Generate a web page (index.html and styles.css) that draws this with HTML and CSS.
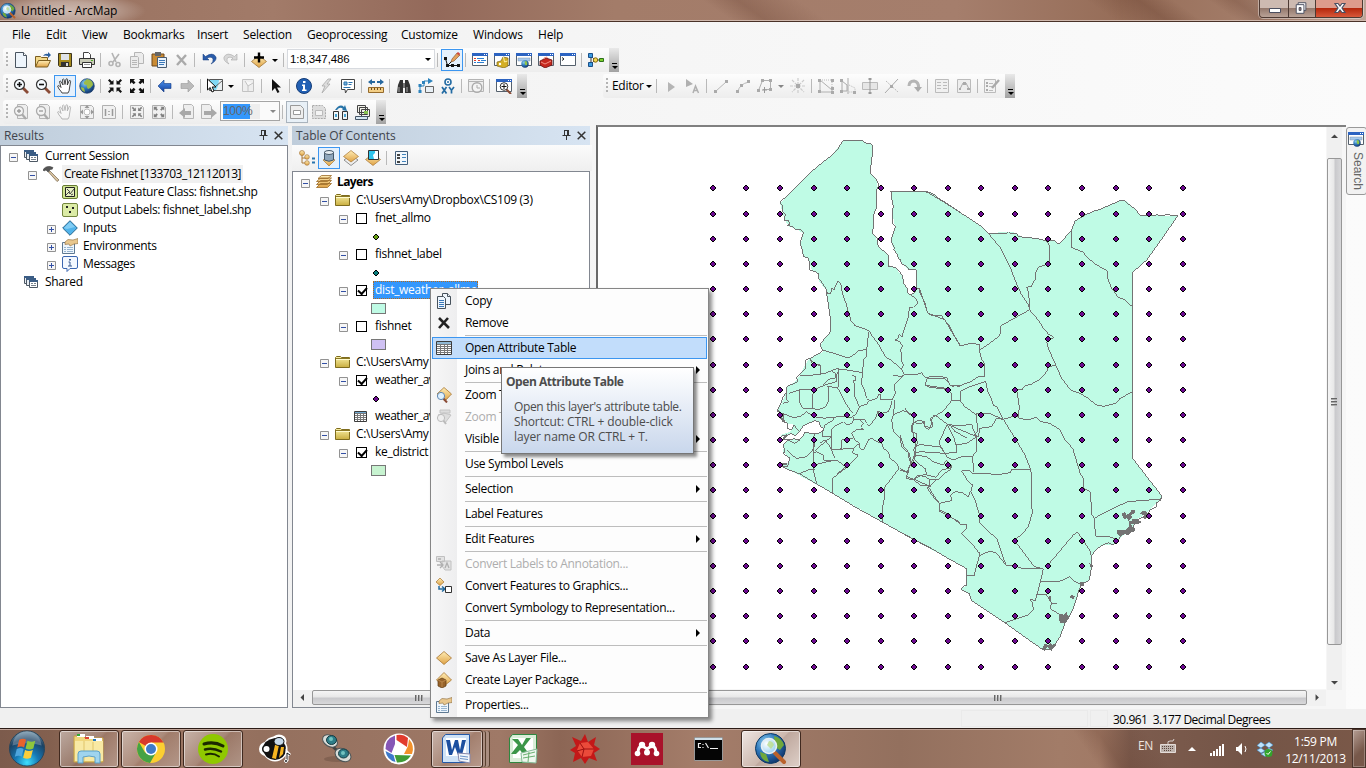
FILE: index.html
```
<!DOCTYPE html>
<html lang="en">
<head>
<meta charset="utf-8">
<title>Untitled - ArcMap</title>
<link rel="stylesheet" href="styles.css">
</head>
<body>
<svg class="defs" width="0" height="0">
<defs>
<linearGradient id="gold" x1="0" y1="0" x2="0" y2="1"><stop offset="0" stop-color="#ffedb5"/><stop offset="1" stop-color="#dfa245"/></linearGradient>
<linearGradient id="fold" x1="0" y1="0" x2="0" y2="1"><stop offset="0" stop-color="#fbf2a8"/><stop offset="1" stop-color="#c9ae40"/></linearGradient>
<linearGradient id="blu" x1="0" y1="0" x2="0" y2="1"><stop offset="0" stop-color="#4d95f0"/><stop offset="1" stop-color="#153f9c"/></linearGradient>
<radialGradient id="glb" cx=".35" cy=".3" r=".8"><stop offset="0" stop-color="#8fd0f0"/><stop offset=".45" stop-color="#2f78bc"/><stop offset="1" stop-color="#0b2a5e"/></radialGradient>
<radialGradient id="orb" cx=".5" cy=".9" r=".95"><stop offset="0" stop-color="#3fe0ff"/><stop offset=".35" stop-color="#1678b4"/><stop offset=".7" stop-color="#1b4163"/><stop offset="1" stop-color="#7fa3b8"/></radialGradient>
<radialGradient id="lens" cx=".35" cy=".35" r=".8"><stop offset="0" stop-color="#fff"/><stop offset="1" stop-color="#8ccbee"/></radialGradient>
<symbol id="new" viewBox="0 0 16 16"><path d="M2.500.5h8l3 3v12h-11z" fill="#eef5fc" stroke="#4a5560"/><path d="M10.500.5v3h3" fill="#fff" stroke="#4a5560"/></symbol>
<symbol id="open" viewBox="0 0 16 16"><path d="M.5 14.500v-10h5l1 1h6v3" fill="#f3d98a" stroke="#7b5d20"/><path d="M.5 15l3-6.500h12l-3 6.500z" fill="url(#gold)" stroke="#7b5d20"/><path d="M8 4q2-3 5-2V0l3 3-3 3V4q-3-1-5 0z" fill="#2b5f9e"/></symbol>
<symbol id="save" viewBox="0 0 16 16"><path d="M1.500 1.500h13v13h-12l-1-1z" fill="#a68b1e" stroke="#3c3520"/><path d="M4 2h8v6H4z" fill="#dfe3e8"/><path d="M4 10h8v4H4z" fill="#333"/><path d="M9 11h2v3H9z" fill="#ddd"/></symbol>
<symbol id="print" viewBox="0 0 16 16"><path d="M4.500 6V.5h5l2 2V6" fill="#fff" stroke="#444"/><path d="M.5 6.500h15v6h-15z" fill="#c9cbb8" stroke="#333"/><path d="M3.500 10.500h9v5h-9z" fill="#fff" stroke="#333"/><path d="M12 8h2v1h-2z" fill="#54b12c"/><path d="M5 12.500h6" stroke="#999"/></symbol>
<symbol id="cut" viewBox="0 0 16 16"><g fill="none" stroke="#b4b4b4" stroke-width="1.600"><path d="M5 1l4 9M12 2L6 10"/><circle cx="4" cy="11.500" r="2"/><circle cx="11" cy="12.500" r="2"/></g></symbol>
<symbol id="copyg" viewBox="0 0 16 16"><g fill="#ececec" stroke="#b6b6b6"><path d="M5.500.5h7l2 2v9h-9z"/><path d="M1.500 4.500h7l1 1v10h-8z"/><path d="M3 8.500h5M3 10.500h5M3 12.500h5"/></g></symbol>
<symbol id="copy" viewBox="0 0 16 16"><g fill="#eef5fc" stroke="#47525c"><path d="M6.500.5h5l3 3v8h-8z"/><path d="M11.500.5v3h3M1.500 3.500h6l2 2v10h-8z"/></g><path d="M3 7.500h5M3 9.500h5M3 11.500h5M3 13.500h5" stroke="#3b78b8"/></symbol>
<symbol id="paste" viewBox="0 0 16 16"><path d="M1 2h12v12H1z" fill="#c98b35" stroke="#6f481c"/><path d="M4 0h6v4H4z" fill="#666"/><path d="M6.500 5.500h9v10h-9z" fill="#eaf3fc" stroke="#4b5c70"/><path d="M8 8.500h6M8 10.500h6M8 12.500h5" stroke="#3b78b8"/></symbol>
<symbol id="del" viewBox="0 0 16 16"><path d="M4 3l9 10M13 3L4 13" stroke="#aaa" stroke-width="2.400"/></symbol>
<symbol id="x" viewBox="0 0 16 16"><path d="M3 3l10 10M12 3L3 13" stroke="#222" stroke-width="2.600"/></symbol>
<symbol id="undo" viewBox="0 0 16 16"><path d="M2 2v6h6L6 6q5-2 6 1 .5 3-2 5 6-3 5-7Q12-.5 4.500 4.500z" fill="#2a5caa" stroke="#1b3f7c" stroke-width=".5"/></symbol>
<symbol id="redo" viewBox="0 0 16 16"><path d="M14 2v6H8l2-2Q5 4 4 7q-.5 3 2 5Q0 9 1 5q3-5.500 10.500-.5z" fill="#d8d8d8" stroke="#aaa" stroke-width=".6"/></symbol>
<symbol id="add" viewBox="0 0 16 16"><path d="M.5 9.500l7.500-6 7.500 6-7.500 6z" fill="url(#gold)" stroke="#a0763a" stroke-width=".8"/><path d="M8 .5v10M3 5.500h10" stroke="#000" stroke-width="2.400"/></symbol>
<symbol id="arr" viewBox="0 0 6 16"><path d="M0 7h6L3 10z" fill="#000"/></symbol>
<symbol id="edtr" viewBox="0 0 16 16"><path d="M1.500 6.500l2 7h10M3.500 13.500L8 9" fill="none" stroke="#111"/><path d="M0 5h3v3H0zM2 12h3v3H2zM7 12h3v3H7zM13 12h3v3h-3z" fill="#111"/><path d="M7 10l1-3 5-6 3 2-6 6z" fill="#e3a05b" stroke="#7c4c28" stroke-width=".6"/><path d="M12.500 1.500L14 0l2 1.500-1 2z" fill="#d1473e"/></symbol>
<symbol id="win" viewBox="0 0 16 16"><path d="M.5 1.500h15v12H.5z" fill="#fff" stroke="#55606c"/><path d="M0 1h16v3H0z" fill="#2c63c1"/><path d="M12 2h1v1h-1zM14 2h1v1h-1z" fill="#fff"/></symbol>
<symbol id="toc" viewBox="0 0 16 16"><use href="#win"/><path d="M2 6.500h2M2 8.500h2M6 8.500h2" stroke="#e23c2c"/><path d="M5 6.500h7M9 8.500h5M5 10.500h7M2 10.500h2" stroke="#2c7fd0"/></symbol>
<symbol id="cat" viewBox="0 0 16 16"><use href="#win"/><path d="M3 10l4-1 2-4 5 1v8l-4 2-7-2z" fill="#d3ae25" stroke="#7c6414" stroke-width=".7"/><path d="M9.500 5l1 5 3-1" fill="none" stroke="#fff0a0"/><circle cx="6" cy="12" r="1.200" fill="#fff"/></symbol>
<symbol id="srch" viewBox="0 0 16 16"><use href="#win"/><path d="M2 6h12v3H2z" fill="#a6c9ec" stroke="#8296ad" stroke-width=".5"/><circle cx="9" cy="12" r="3.700" fill="url(#glb)"/><path d="M9 9q3 0 2 4-3 1-2-4z" fill="#8fc447"/></symbol>
<symbol id="tbx" viewBox="0 0 16 16"><use href="#win"/><path d="M2 9l6-3 6 2v5l-7 3-5-3z" fill="#c5281e" stroke="#611" stroke-width=".8"/><path d="M3 10l4 2 6-3M6 7V6l3-1v1" fill="none" stroke="#f19184"/></symbol>
<symbol id="py" viewBox="0 0 16 16"><use href="#win"/><path d="M2 5.500l2 1.500-2 1.500" fill="none" stroke="#222"/></symbol>
<symbol id="mod" viewBox="0 0 16 16"><path d="M3 3v10M3 4l4 4h8M3 12l4-4" fill="none" stroke="#333"/><path d="M.5 1.500h4v4h-4zM.5 10.500h4v4h-4z" fill="#3b9be0" stroke="#1b4f88"/><circle cx="7.500" cy="8" r="2.200" fill="#f6d64c" stroke="#856b12"/><path d="M11.500 6.500h4v3h-4z" fill="#7bd02b" stroke="#2d701c"/></symbol>
<symbol id="zin" viewBox="0 0 16 16"><path d="M9 9l6 6" stroke="#8a4b36" stroke-width="2.800"/><circle cx="6.500" cy="6.500" r="5" fill="#f6fbff" stroke="#333" stroke-width="1.200"/><path d="M6.500 4v5M4 6.500h5" stroke="#111" stroke-width="1.600"/></symbol>
<symbol id="zout" viewBox="0 0 16 16"><path d="M9 9l6 6" stroke="#8a4b36" stroke-width="2.800"/><circle cx="6.500" cy="6.500" r="5" fill="#f6fbff" stroke="#333" stroke-width="1.200"/><path d="M4 6.500h5" stroke="#111" stroke-width="1.600"/></symbol>
<symbol id="hand" viewBox="0 0 16 16"><path d="M5 15q-1-2-3-4L.6 8q.6-1 2 0L4 9.500 2.500 3.500q.5-1 1.500 0L6 7 5.500 1.500q1-1 1.600 0L8 6.500 9 1q1-.8 1.600.3L10.300 7l2-4.500q1-.5 1.300.8L12.500 10q0 3-1.500 5z" fill="#fff" stroke="#333" stroke-width=".9"/></symbol>
<symbol id="globe" viewBox="0 0 16 16"><circle cx="8" cy="8" r="7.300" fill="url(#glb)" stroke="#23446e" stroke-width=".7"/><path d="M8 1q6 1 6 6-2 3-5 4-2-2-1-4-4 0-3-3zM2 9l3 1 1 4q-4-1-4-5z" fill="#9dbb4a"/></symbol>
<symbol id="fin" viewBox="0 0 16 16"><g fill="#111"><path id="fina" d="M6.500 2v4.500H2L3.500 5 1 2.500 2.500 1 5 3.500z"/><use href="#fina" transform="matrix(-1 0 0 1 16 0)"/><use href="#fina" transform="matrix(1 0 0 -1 0 16)"/><use href="#fina" transform="matrix(-1 0 0 -1 16 16)"/></g></symbol>
<symbol id="fout" viewBox="0 0 16 16"><g fill="#111"><path id="fouta" d="M1 1h5L4.500 2.500l2 2-1.800 1.800-2-2L1 6z"/><use href="#fouta" transform="matrix(-1 0 0 1 16 0)"/><use href="#fouta" transform="matrix(1 0 0 -1 0 16)"/><use href="#fouta" transform="matrix(-1 0 0 -1 16 16)"/></g></symbol>
<symbol id="back" viewBox="0 0 16 16"><path d="M1 8l6-6v3.500h7v5H7V14z" fill="url(#blu)" stroke="#123a84" stroke-width=".6"/></symbol>
<symbol id="fwd" viewBox="0 0 16 16"><path d="M15 8L9 2v3.500H2v5h7V14z" fill="#bbb" stroke="#999" stroke-width=".6"/></symbol>
<symbol id="sel" viewBox="0 0 16 16"><path d="M2.500 1.500h13v11h-13z" fill="#7fd8f5" stroke="#555"/><path d="M9 12l2-4 1-6h3v10z" fill="#e9eef0"/><path d="M9 8l6-5" stroke="#666"/><path d="M.5 1v11l2.700-2.500L5 14l2-1-1.800-4H9z" fill="#fff" stroke="#111"/></symbol>
<symbol id="clr" viewBox="0 0 16 16"><path d="M2.500 1.500h11v12h-11zM5 3l3 5 5-3M8 8v5" fill="#eee" stroke="#c2c2c2"/></symbol>
<symbol id="ptr" viewBox="0 0 16 16"><path d="M4 1v12l3-3 2.500 5 2-1L9 9.500h4z" fill="#111"/></symbol>
<symbol id="info" viewBox="0 0 16 16"><circle cx="8" cy="8" r="7.500" fill="#2260b4" stroke="#153d78"/><path d="M7 3h2.500v2H7zM6 6.500h3v5h1.500V13H6v-1.500h1V8H6z" fill="#fff"/></symbol>
<symbol id="bolt" viewBox="0 0 16 16"><path d="M10 1L4 8h3l-3 7 8-9H9l4-5z" fill="#ddd" stroke="#aaa" stroke-width=".8"/></symbol>
<symbol id="html" viewBox="0 0 16 16"><path d="M1.500 1.500h13v10h-7l-2 3.500-.5-3.500H1.500z" fill="#fff" stroke="#444"/><path d="M4 4h3v3H4z" fill="#71b0da" stroke="#2c74ae"/><path d="M8.500 4.500h4M8.500 6.500h3M3.500 9.500h7" stroke="#2c74ae"/></symbol>
<symbol id="meas" viewBox="0 0 16 16"><path d="M.500 9.500h15v5H.500z" fill="#f3ce85" stroke="#956a2c"/><path d="M3.500 10v2M6.500 10v2M9.500 10v2M12.500 10v2" stroke="#6d4c1e"/><path d="M0 4l4-3v2h8V1l4 3-4 3V5H4v2z" fill="#27689f"/><path d="M7 3h2v2H7z" fill="#f6f6f6"/></symbol>
<symbol id="find" viewBox="0 0 16 16"><path d="M1 15l1-8 2-5h3v13zM15 15l-1-8-2-5H9v13z" fill="#333"/><path d="M7 5h2v5H7z" fill="#777"/><path d="M3 9v5M11 9v5" stroke="#aaa"/></symbol>
<symbol id="route" viewBox="0 0 16 16"><path d="M2 14V8h4V3h7" fill="none" stroke="#2d83bd"/><path d="M10 0l5 3-5 3zM4 3h3v3H4zM.5 6h3v3h-3zM.5 12h3v3h-3z" fill="#2d83bd"/><path d="M7.500 8.500h8v6h-8z" fill="#e8f0f6" stroke="#666"/></symbol>
<symbol id="xy" viewBox="0 0 16 16"><circle cx="8" cy="4" r="3" fill="#fff" stroke="#236ba3" stroke-width="1.600"/><circle cx="8" cy="4" r="1" fill="#236ba3"/><path d="M2 9l4.500 6.500M6.500 9L2 15.500M9 9l2.500 3.200L14 9M11.500 12v3.500" fill="none" stroke="#236ba3" stroke-width="1.700"/></symbol>
<symbol id="time" viewBox="0 0 16 16"><path d="M.5 1.500h15v12H.5zM1 3.500h14" fill="#eee" stroke="#b4b4b4"/><circle cx="9" cy="9.500" r="4.800" fill="#f4f4f4" stroke="#aaa" stroke-width="1.400"/><path d="M9 7v3h3" fill="none" stroke="#aaa"/></symbol>
<symbol id="view" viewBox="0 0 16 16"><use href="#win"/><path d="M10 11l5 5" stroke="#8a4b36" stroke-width="2"/><circle cx="8" cy="8.500" r="3.800" fill="#fff" stroke="#333"/><path d="M8 6v5M5.500 8.500h5" stroke="#111"/></symbol>
<symbol id="pg" viewBox="0 0 16 16"><path d="M4.500.5h8l2 2v12h-10z" fill="#eee" stroke="#b5b5b5"/></symbol>
<symbol id="lzin" viewBox="0 0 16 16"><use href="#pg"/><path d="M8 9l5 6" stroke="#aaa" stroke-width="2.200"/><circle cx="6" cy="7" r="4.500" fill="#f3f3f3" stroke="#aaa" stroke-width="1.300"/><path d="M6 5v4M4 7h4" stroke="#999" stroke-width="1.300"/></symbol>
<symbol id="lzout" viewBox="0 0 16 16"><use href="#pg"/><path d="M8 9l5 6" stroke="#aaa" stroke-width="2.200"/><circle cx="6" cy="7" r="4.500" fill="#f3f3f3" stroke="#aaa" stroke-width="1.300"/><path d="M4 7h4" stroke="#999" stroke-width="1.300"/></symbol>
<symbol id="lpage" viewBox="0 0 16 16"><path d="M1.500 1.500h11l2 2v11h-13z" fill="#f0f0f0" stroke="#b0b0b0"/></symbol>
<symbol id="lfull" viewBox="0 0 16 16"><use href="#lpage"/><path d="M8 1l2.500 3h-5zM8 15l2.500-3h-5zM1 8l3-2.500v5zM15 8l-3-2.500v5z" fill="#999"/><circle cx="8" cy="8" r="3" fill="#fff" stroke="#bbb"/></symbol>
<symbol id="l11" viewBox="0 0 16 16"><use href="#lpage"/><path d="M4.500 5v7M11.500 5v7M8 7v1M8 10v1" stroke="#999" stroke-width="1.500"/></symbol>
<symbol id="lfin" viewBox="0 0 16 16"><use href="#lpage"/><use href="#fin" x="2" y="2" width="12" height="12" opacity=".5"/></symbol>
<symbol id="lfout" viewBox="0 0 16 16"><use href="#lpage"/><use href="#fout" x="2" y="2" width="12" height="12" opacity=".5"/></symbol>
<symbol id="lback" viewBox="0 0 16 16"><use href="#pg"/><path d="M0 9l6-5v3h6v4H6v3z" fill="#a8a8a8"/></symbol>
<symbol id="lfwd" viewBox="0 0 16 16"><path d="M.5.5h8l2 2v12H.5z" fill="#eee" stroke="#b5b5b5"/><path d="M16 9l-6-5v3H3v4h7v3z" fill="#a8a8a8"/></symbol>
<symbol id="toggle" viewBox="0 0 16 16"><path d="M1.500 1.500h10l3 3v10h-13z" fill="#eee" stroke="#999"/><path d="M4.500 6.500h7v4h-7z" fill="#fff" stroke="#999"/></symbol>
<symbol id="draft" viewBox="0 0 16 16"><path d="M1.500 1.500h10l3 3v10h-13z" fill="#ddd" stroke="#aaa" stroke-dasharray="2 1"/><path d="M4.500 6.500h7v5h-7z" fill="#f4f4f4" stroke="#bbb"/></symbol>
<symbol id="focus" viewBox="0 0 16 16"><path d="M.5 7.500h5v8h-5zM9.500 7.500h5v8h-5z" fill="#eef5f8" stroke="#333"/><path d="M2 10h2v3H2zM11 10h2v3h-2z" fill="#48a2cf"/><path d="M2 6q5-7 9-3l1-2 2 6-5-1 1-1Q7 2 4 6z" fill="#2874a8"/></symbol>
<symbol id="ddp" viewBox="0 0 16 16"><g fill="#f2f2ea" stroke="#444"><path d="M2.500 1.500h8v7h-8zM4.500 3.500h8v7h-8zM6.500 5.500h8v7h-8z"/></g><path d="M9 7h4v3H9z" fill="#86c14f"/><path d="M.500 12.500h12v3H.500z" fill="#d8e8f4" stroke="#456"/></symbol>
<symbol id="e1" viewBox="0 0 16 16"><path d="M5 4v10l7-5z" fill="#b5b5b5"/></symbol>
<symbol id="e2" viewBox="0 0 16 16"><path d="M1 1v8l7-3z" fill="#b0b0b0"/><path d="M8 15l2.500-7 3 7M9 12.500h4" fill="none" stroke="#b0b0b0" stroke-width="1.500"/></symbol>
<symbol id="e3" viewBox="0 0 16 16"><path d="M3 13L13 4" stroke="#b8b8b8"/><path d="M1 12h3v3H1zM12 2h3v3h-3z" fill="#aaa"/></symbol>
<symbol id="e4" viewBox="0 0 16 16"><path d="M3 14q1-8 11-10" fill="none" stroke="#b8b8b8"/><path d="M1 12h3v3H1zM5 6h3v3H5zM12 2h3v3h-3z" fill="#aaa"/></symbol>
<symbol id="e5" viewBox="0 0 16 16"><path d="M1.500 12.500l4-10h8v9H6" fill="none" stroke="#b0b0b0"/><path d="M4 1h3v3H4zM12 1h3v3h-3zM0 11h3v3H0zM12 10h3v3h-3z" fill="#aaa"/><path d="M7.500 9v6M5 12h5" stroke="#999"/></symbol>
<symbol id="e6" viewBox="0 0 16 16"><path d="M8 0v16M0 8h16M2 2l12 12M14 2L2 14" stroke="#ccc" stroke-width="1.200" stroke-dasharray="3 1"/><path d="M6 6h4v4H6z" fill="#aaa"/></symbol>
<symbol id="e7" viewBox="0 0 16 16"><path d="M2 2l12 10v2H2z" fill="none" stroke="#b0b0b0"/><path d="M2 2h12v10" fill="none" stroke="#bbb" stroke-dasharray="1 1"/><path d="M0 1h3v3H0zM13 1h3v3h-3zM0 12h3v3H0zM13 9h3v3h-3zM13 13h3v3h-3z" fill="#aaa"/></symbol>
<symbol id="e8" viewBox="0 0 16 16"><path d="M2 3l5 4v6H2zM8 0v16" fill="none" stroke="#aaa"/><path d="M9 7l6 3v4H9" fill="none" stroke="#bbb" stroke-dasharray="1 1"/><path d="M0 1h3v3H0zM0 12h3v3H0zM13 13h3v3h-3z" fill="#aaa"/></symbol>
<symbol id="e9" viewBox="0 0 16 16"><path d="M.5 4.500h15v7H.5z" fill="#e6e6e6" stroke="#bbb"/><path d="M8 1v14" stroke="#999"/><path d="M6.500 0h3v2h-3zM6.500 14h3v2h-3z" fill="#999"/></symbol>
<symbol id="e10" viewBox="0 0 16 16"><path d="M1 15L14 1" stroke="#aaa"/><path d="M2 3l12 11" stroke="#bbb" stroke-dasharray="2 1"/><path d="M6 7h3v3H6z" fill="#aaa"/></symbol>
<symbol id="e11" viewBox="0 0 16 16"><path d="M3 8q0-5 5-5 5 1 4.500 7" fill="none" stroke="#b5b5b5" stroke-width="3"/><path d="M8 9h8l-4 5z" fill="#aaa"/></symbol>
<symbol id="e12" viewBox="0 0 16 16"><path d="M1.500 1.500h13v13h-13z" fill="#f0f0f0" stroke="#bbb"/><path d="M3 4.500h4M9 4.500h4M3 7.500h4M9 7.500h4M3 10.500h4M9 10.500h4" stroke="#bbb"/></symbol>
<symbol id="e13" viewBox="0 0 16 16"><path d="M1.500 1.500h13v13h-13z" fill="#eee" stroke="#bbb"/><path d="M4 11l3-6h3l3 6" fill="none" stroke="#aaa"/><path d="M3 10h2v2H3zM7 4h3v3H7zM11 10h3v2h-3z" fill="#aaa"/></symbol>
<symbol id="e14" viewBox="0 0 16 16"><path d="M.5 1.500h11v13H.5z" fill="#f2f2f2" stroke="#bbb"/><path d="M2 4h2v2H2zM2 7h2v2H2zM2 11h2v2H2z" fill="#aaa"/><path d="M5 5.500h4M5 8.500h3M5 12.500h4" stroke="#bbb"/><path d="M8 10l7-8" stroke="#aaa" stroke-width="2.400"/></symbol>
<symbol id="minus" viewBox="0 0 9 9"><path d="M.5.5h8v8h-8z" fill="#f6f6f6" stroke="#929292"/><path d="M2 4.500h5" stroke="#3350a5"/></symbol>
<symbol id="plus" viewBox="0 0 9 9"><path d="M.5.5h8v8h-8z" fill="#f6f6f6" stroke="#929292"/><path d="M2 4.500h5M4.500 2v5" stroke="#3350a5"/></symbol>
<symbol id="sess" viewBox="0 0 16 16"><g stroke="#4d5864"><path d="M.5 2.500h9v7h-9z" fill="#e8edf2"/><path d="M2.500 4.500h9v7h-9z" fill="#e8edf2"/><path d="M5.500 6.500h8v7h-8z" fill="#fff"/></g><path d="M0 2h10v2H0zM2 4h10v2H2zM5 6h9v2H5z" fill="#3b5d85"/><path d="M7 9.500h2M10 9.500h2M7 11.500h5" stroke="#77828c"/></symbol>
<symbol id="hammer" viewBox="0 0 16 16"><path d="M7 5l9 9-2 1.500L5.500 6z" fill="#d9c3a0" stroke="#75664e" stroke-width=".7"/><path d="M0 4q2-4 7-3.500l3 1-1 2-1-.5-3 3-2-2-2 1z" fill="#555" stroke="#333" stroke-width=".5"/></symbol>
<symbol id="fc" viewBox="0 0 16 16"><rect x=".5" y="1.500" width="15" height="13" rx="1.500" fill="#d0e591" stroke="#667a33"/><path d="M3.500 3.500h9v9h-9z" fill="#e7f1c2" stroke="#222"/><path d="M4 11l3-3 1 2 4-5M5 5l3 3M9 11l2-1" stroke="#444" fill="none"/></symbol>
<symbol id="pts" viewBox="0 0 16 16"><rect x=".5" y="1.500" width="15" height="13" rx="1.500" fill="#dceca6" stroke="#74863e"/><path d="M4 4h2v2H4zM10 5h2v2h-2zM7 9h2v2H7z" fill="#222"/></symbol>
<symbol id="inp" viewBox="0 0 16 16"><path d="M8 .7L15.300 8 8 15.300.7 8z" fill="#51b3ea" stroke="#24658e"/><path d="M8 2l5 5-8 2-3-1z" fill="#8ed3f6" opacity=".8"/></symbol>
<symbol id="props" viewBox="0 0 16 16"><path d="M.5 4.500h12v11H.5z" fill="#eef6fd" stroke="#5e7992"/><path d="M2 9.500h2M5 9.500h6M2 11.500h2M5 11.500h6M2 13.500h2M5 13.500h6" stroke="#98b5d0"/><path d="M3 4l3-2.500 5 .5 5-1.500v5l-4 .5-4 2-1-2-4 .5z" fill="#e8c78e" stroke="#8c6a3a" stroke-width=".6"/></symbol>
<symbol id="msg" viewBox="0 0 16 16"><path d="M2 .5h12q1.500 0 1.500 1.500v9q0 1.500-1.500 1.500H8L5 15.500v-3H2Q.5 12.500.5 11V2Q.5.5 2 .5z" fill="#f3f8ff" stroke="#3b66b0"/><path d="M7 3h2v1.500H7z" fill="#34578f"/><path d="M6.500 6h1.500v4M6 10h4" fill="none" stroke="#34578f"/></symbol>
<symbol id="layers" viewBox="0 0 16 16"><g fill="url(#gold)" stroke="#9a6a26" stroke-width=".8"><path d="M.5 13.500l4-4h11l-4 4zM.5 10.500l4-4h11l-4 4zM.5 7.500l4-3.500h11l-4 3.500zM2 4.500l3.500-3h10l-3.500 3z"/></g></symbol>
<symbol id="folder" viewBox="0 0 16 14"><path d="M.5 12.500v-10l1-1h4l1 1h8v10z" fill="url(#fold)" stroke="#7e6c1e"/><path d="M1 4.500h14" stroke="#fffbd0"/><path d="M1 3.500h14" stroke="#8a7824"/></symbol>
<symbol id="table" viewBox="0 0 16 16"><path d="M.5 1.500h15v13H.5z" fill="#fff" stroke="#3c3c3c"/><path d="M1 2h14v2H1z" fill="#8fb7d3"/><path d="M1 4.500h14M1 6.500h14M1 8.500h14M1 10.500h14M1 12.500h14M4.500 4v10M8.500 4v10M11.500 4v10" stroke="#777"/></symbol>
<symbol id="tableS" viewBox="0 0 13 11"><path d="M.5.5h12v10H.5z" fill="#fff" stroke="#3c3c3c"/><path d="M1 1h11v1H1z" fill="#6fa7cf"/><path d="M1 2.500h11M1 4.500h11M1 6.500h11M1 8.500h11M3.500 2v8M6.500 2v8M9.500 2v8" stroke="#777"/></symbol>
<symbol id="lay" viewBox="0 0 16 16"><path d="M.5 8L8 1.500 15.500 8 8 14.500z" fill="url(#gold)" stroke="#a77632" stroke-width=".8"/></symbol>
<symbol id="laypkg" viewBox="0 0 16 16"><path d="M.5 8L8 .5 15.500 8 8 14z" fill="url(#gold)" stroke="#a77632" stroke-width=".8"/><path d="M2 8l4-2 4 2v6l-4 2-4-2z" fill="#98642b" stroke="#5c3a14" stroke-width=".7"/><path d="M2 8l4 2 4-2M6 10v5" stroke="#c9975a" fill="none" stroke-width=".7"/></symbol>
<symbol id="zlay" viewBox="0 0 16 16"><path d="M1 7l7-6.500L15.500 7 9 14z" fill="url(#gold)" stroke="#a77632" stroke-width=".8"/><path d="M7 11l4 4.500" stroke="#8a4b36" stroke-width="2"/><circle cx="5" cy="9" r="3.600" fill="#dff1ff" stroke="#6289b3"/></symbol>
<symbol id="zvis" viewBox="0 0 16 16"><path d="M4 1h10v3H4zM2 6l6-2 7 2-6 8z" fill="#ddd" stroke="#c4c4c4"/><path d="M7 11l3 4" stroke="#bbb" stroke-width="2"/><circle cx="5" cy="9" r="3.600" fill="#eee" stroke="#bbb"/></symbol>
<symbol id="cla" viewBox="0 0 16 16"><path d="M.5.5h8v5h-8zM6 5h9v9H9l-3-4z" fill="#e3e3e3" stroke="#c0c0c0"/><path d="M2 3h3M1 9h6M4 6l3 3-3 3M9 12l2-5 2 5" fill="none" stroke="#b0b0b0" stroke-width="1.300"/></symbol>
<symbol id="cfg" viewBox="0 0 16 16"><path d="M0 4l4-4 4 4-4 3.500z" fill="url(#gold)" stroke="#a77632" stroke-width=".7"/><path d="M3 8v3h5M6 8.500l3 2.500-3 2.500" fill="none" stroke="#236b9f" stroke-width="1.500"/><path d="M9.500 8.500h6v6h-6z" fill="#fff" stroke="#333"/></symbol>
<symbol id="t1" viewBox="0 0 16 16"><path d="M3 4v9h6M3 8h5" fill="none" stroke="#a7783b"/><g fill="url(#gold)" stroke="#a7783b" stroke-width=".7"><circle cx="3" cy="3" r="2.500"/><circle cx="8" cy="7" r="2.300"/><circle cx="8" cy="13" r="2.300"/></g><path d="M13 8.500h3M13 12.500h3" stroke="#2875ae" stroke-width="2"/></symbol>
<symbol id="t2" viewBox="0 0 16 16"><path d="M2 10l6-4 6 4-6 6z" fill="url(#gold)" stroke="#a77632" stroke-width=".7"/><path d="M3.500 2v8q4.500 2.500 9 0V2z" fill="#8fa7bd" stroke="#44586a"/><ellipse cx="8" cy="2.500" rx="4.500" ry="2" fill="#e7eef3" stroke="#44586a"/></symbol>
<symbol id="t3" viewBox="0 0 16 16"><path d="M1 10l7-5 7 5-7 5.500z" fill="#eee" stroke="#666" stroke-width=".7"/><path d="M.5 6.500L8 .5l7.500 6L8 12z" fill="url(#gold)" stroke="#a77632" stroke-width=".7"/></symbol>
<symbol id="t4" viewBox="0 0 16 16"><path d="M.5 9.500L8 4l7.500 5.500L8 15.500z" fill="url(#gold)" stroke="#a77632" stroke-width=".7"/><path d="M3.500.5h10v9h-10z" fill="#32c4ea" stroke="#333"/><path d="M9 9l-1-4 2-2V1h3v8z" fill="#fff"/></symbol>
<symbol id="t5" viewBox="0 0 16 16"><path d="M2.500 1.500h12v13h-12z" fill="#f3f8fc" stroke="#445f7b"/><path d="M4 4h3v2H4zM4 7h3v2H4zM4 11h3v2H4z" fill="#444"/><path d="M9 4.500h4M9 7.500h4M9 11.500h4" stroke="#4384bd"/></symbol>
<symbol id="pin" viewBox="0 0 9 11"><path d="M2.500 0v5.500M6.500 0v5.500M2 .500h5M.5 5.500h8M4.500 6v4" stroke="#333" fill="none"/><path d="M5.500 0v5.500" stroke="#333"/></symbol>
<symbol id="cls" viewBox="0 0 9 9"><path d="M.7.7l7.600 7.600M8.300.7L.7 8.300" stroke="#333" stroke-width="1.500"/></symbol>
<symbol id="arc" viewBox="0 0 32 32"><circle cx="15.500" cy="15.500" r="15" fill="url(#glb)" stroke="#0d3b66"/><path d="M19 3q8 2 10 9l-4 5-5-3zM5 19l6 2 3 8q-8-1-9-10z" fill="#6fa83c"/><path d="M20 20l9 9" stroke="#b9622c" stroke-width="4" stroke-linecap="round"/><circle cx="14" cy="13" r="7.500" fill="url(#lens)" stroke="#e8eef2" stroke-width="1.600"/><path d="M14 8q4 0 5 4l-3 4-4-4z" fill="#b9dc8c" opacity=".8"/></symbol>
<symbol id="dot" viewBox="-3 -3 6 6"><path d="M-1-3h2v1h1v1h1v2h-1v1h-1v1h-2v-1h-1v-1h-1v-2h1v-1h1z" fill="#000"/><path d="M-1-2h2v1h1v2h-1v1h-2v-1h-1v-2h1z" fill="currentColor"/></symbol>
</defs>
</svg>

<div class="desktop">
<header class="titlebar">
  <div class="caption"><svg class="i16"><use href="#arc"/></svg><span>Untitled - ArcMap</span></div>
  <div class="winbtns">
    <svg class="wb-min" viewBox="0 0 28 17"><path d="M9.500 8.500h11v4h-11z" fill="#fff" stroke="#4b4f60"/></svg>
    <svg class="wb-max" viewBox="0 0 27 17"><path d="M9.500 2.500h8v8h-8z" fill="#fff" stroke="#4b4f60"/><path d="M7.500 4.500h8v9h-8z" fill="#fff" stroke="#4b4f60"/><path d="M10.500 7.500h2v3h-2z" fill="#9a7465" stroke="#4b4f60"/></svg>
    <svg class="wb-close" viewBox="0 0 47 17"><path d="M19 3.500h3l2 2.500 2-2.500h3L26 8l3 4.500h-3L24 10l-2 2.500h-3L22 8z" fill="#fff" stroke="#4a5063" stroke-width="1.200"/></svg>
  </div>
</header>

<nav class="menubar"><span>File</span><span>Edit</span><span>View</span><span>Bookmarks</span><span>Insert</span><span>Selection</span><span>Geoprocessing</span><span>Customize</span><span>Windows</span><span>Help</span></nav>

<div class="toolrows">
  <div class="toolrow">
    <div class="band">
      <i class="grip"></i>
      <svg class="t"><use href="#new"/></svg><svg class="t"><use href="#open"/></svg><svg class="t"><use href="#save"/></svg><svg class="t"><use href="#print"/></svg><i class="sep"></i>
      <svg class="t"><use href="#cut"/></svg><svg class="t"><use href="#copyg"/></svg><svg class="t"><use href="#paste"/></svg><svg class="t"><use href="#del"/></svg><i class="sep"></i>
      <svg class="t"><use href="#undo"/></svg><svg class="t"><use href="#redo"/></svg><i class="sep"></i>
      <svg class="t"><use href="#add"/></svg><svg class="drop"><use href="#arr"/></svg><i class="sep"></i>
      <div class="combo scale"><span>1:8,347,486</span><svg class="drop"><use href="#arr"/></svg></div><i class="sep"></i>
      <svg class="t on"><use href="#edtr"/></svg><i class="sep"></i>
      <svg class="t"><use href="#toc"/></svg><svg class="t"><use href="#cat"/></svg><svg class="t"><use href="#srch"/></svg><svg class="t"><use href="#tbx"/></svg><svg class="t"><use href="#py"/></svg><i class="sep"></i>
      <svg class="t"><use href="#mod"/></svg><i class="end"></i>
    </div>
  </div>
  <div class="toolrow">
    <div class="band tools">
      <i class="grip"></i>
      <svg class="t"><use href="#zin"/></svg><svg class="t"><use href="#zout"/></svg><svg class="t on"><use href="#hand"/></svg><svg class="t"><use href="#globe"/></svg><i class="sep"></i>
      <svg class="t"><use href="#fin"/></svg><svg class="t"><use href="#fout"/></svg><i class="sep"></i>
      <svg class="t"><use href="#back"/></svg><svg class="t"><use href="#fwd"/></svg><i class="sep"></i>
      <svg class="t"><use href="#sel"/></svg><svg class="drop"><use href="#arr"/></svg><svg class="t"><use href="#clr"/></svg><i class="sep"></i>
      <svg class="t"><use href="#ptr"/></svg><i class="sep"></i>
      <svg class="t"><use href="#info"/></svg><svg class="t"><use href="#bolt"/></svg><svg class="t"><use href="#html"/></svg><i class="sep"></i>
      <svg class="t"><use href="#meas"/></svg><i class="sep"></i>
      <svg class="t"><use href="#find"/></svg><svg class="t"><use href="#route"/></svg><svg class="t"><use href="#xy"/></svg><i class="sep"></i>
      <svg class="t"><use href="#time"/></svg><i class="sep"></i>
      <svg class="t"><use href="#view"/></svg><i class="end"></i>
    </div>
    <div class="band editor">
      <i class="grip"></i><span class="editlabel">Editor</span><svg class="drop"><use href="#arr"/></svg><i class="sep"></i>
      <svg class="t"><use href="#e1"/></svg><svg class="t"><use href="#e2"/></svg><i class="sep"></i>
      <svg class="t"><use href="#e3"/></svg><svg class="t"><use href="#e4"/></svg><svg class="t"><use href="#e5"/></svg><svg class="drop dim"><use href="#arr"/></svg><svg class="t"><use href="#e6"/></svg><i class="sep"></i>
      <svg class="t"><use href="#e7"/></svg><svg class="t"><use href="#e8"/></svg><svg class="t"><use href="#e9"/></svg><svg class="t"><use href="#e10"/></svg><svg class="t"><use href="#e11"/></svg><i class="sep"></i>
      <svg class="t"><use href="#e12"/></svg><svg class="t"><use href="#e13"/></svg><i class="sep"></i>
      <svg class="t"><use href="#e14"/></svg><i class="end"></i>
    </div>
  </div>
  <div class="toolrow">
    <div class="band">
      <i class="grip"></i>
      <svg class="t"><use href="#lzin"/></svg><svg class="t"><use href="#lzout"/></svg><svg class="t dim"><use href="#hand"/></svg><svg class="t"><use href="#lfull"/></svg><svg class="t"><use href="#l11"/></svg><i class="sep"></i>
      <svg class="t"><use href="#lfin"/></svg><svg class="t"><use href="#lfout"/></svg><i class="sep"></i>
      <svg class="t"><use href="#lback"/></svg><svg class="t"><use href="#lfwd"/></svg>
      <div class="combo pct"><span>100%</span><svg class="drop dim"><use href="#arr"/></svg></div><i class="sep"></i>
      <svg class="t on off"><use href="#toggle"/></svg><svg class="t"><use href="#draft"/></svg><svg class="t"><use href="#focus"/></svg><svg class="t"><use href="#ddp"/></svg><i class="end"></i>
    </div>
  </div>
</div>

<main class="work">
  <section class="panel results">
    <div class="phead"><span>Results</span><svg class="pin"><use href="#pin"/></svg><svg class="cls"><use href="#cls"/></svg></div>
    <div class="tree">
      <div class="row l0"><svg class="ex"><use href="#minus"/></svg><svg class="i16"><use href="#sess"/></svg><span>Current Session</span></div>
      <div class="row l1"><svg class="ex"><use href="#minus"/></svg><svg class="i16"><use href="#hammer"/></svg><span class="hl">Create Fishnet [133703_12112013]</span></div>
      <div class="row l2"><i class="ex"></i><svg class="i16"><use href="#fc"/></svg><span>Output Feature Class: fishnet.shp</span></div>
      <div class="row l2"><i class="ex"></i><svg class="i16"><use href="#pts"/></svg><span>Output Labels: fishnet_label.shp</span></div>
      <div class="row l2"><svg class="ex"><use href="#plus"/></svg><svg class="i16"><use href="#inp"/></svg><span>Inputs</span></div>
      <div class="row l2"><svg class="ex"><use href="#plus"/></svg><svg class="i16"><use href="#props"/></svg><span>Environments</span></div>
      <div class="row l2"><svg class="ex"><use href="#plus"/></svg><svg class="i16"><use href="#msg"/></svg><span>Messages</span></div>
      <div class="row l0"><i class="ex"></i><svg class="i16"><use href="#sess"/></svg><span>Shared</span></div>
    </div>
  </section>

  <section class="panel contents">
    <div class="phead"><span>Table Of Contents</span><svg class="pin"><use href="#pin"/></svg><svg class="cls"><use href="#cls"/></svg></div>
    <div class="tocbar"><svg class="t"><use href="#t1"/></svg><svg class="t on"><use href="#t2"/></svg><svg class="t"><use href="#t3"/></svg><svg class="t"><use href="#t4"/></svg><i class="sep"></i><svg class="t"><use href="#t5"/></svg></div>
    <div class="tocbody">
      <div class="tree">
        <div class="row l0"><svg class="ex"><use href="#minus"/></svg><svg class="i16"><use href="#layers"/></svg><b>Layers</b></div>
        <div class="row l1"><svg class="ex"><use href="#minus"/></svg><svg class="i16"><use href="#folder"/></svg><span>C:\Users\Amy\Dropbox\CS109 (3)</span></div>
        <div class="row l2"><svg class="ex"><use href="#minus"/></svg><i class="cb"></i><span>fnet_allmo</span></div>
        <div class="row sym"><svg class="dot green"><use href="#dot"/></svg></div>
        <div class="row l2"><svg class="ex"><use href="#minus"/></svg><i class="cb"></i><span>fishnet_label</span></div>
        <div class="row sym"><svg class="dot teal"><use href="#dot"/></svg></div>
        <div class="row l2"><svg class="ex"><use href="#minus"/></svg><i class="cb ck"></i><span class="picked">dist_weather_allmo</span></div>
        <div class="row sym"><i class="sw mint"></i></div>
        <div class="row l2"><svg class="ex"><use href="#minus"/></svg><i class="cb"></i><span>fishnet</span></div>
        <div class="row sym"><i class="sw lilac"></i></div>
        <div class="row l1"><svg class="ex"><use href="#minus"/></svg><svg class="i16"><use href="#folder"/></svg><span>C:\Users\Amy</span></div>
        <div class="row l2"><svg class="ex"><use href="#minus"/></svg><i class="cb ck"></i><span class="tight">weather_av</span></div>
        <div class="row sym"><svg class="dot purple"><use href="#dot"/></svg></div>
        <div class="row l2"><i class="ex"></i><svg class="tb"><use href="#tableS"/></svg><span class="tight">weather_av</span></div>
        <div class="row l1"><svg class="ex"><use href="#minus"/></svg><svg class="i16"><use href="#folder"/></svg><span>C:\Users\Amy</span></div>
        <div class="row l2"><svg class="ex"><use href="#minus"/></svg><i class="cb ck"></i><span>ke_district</span></div>
        <div class="row sym"><i class="sw lime"></i></div>
      </div>
      <div class="hbar"><svg viewBox="0 0 15 15"><path d="M9 4v7L5.500 7.500z" fill="#444"/></svg><div class="thumb"><i class="ticks"></i></div></div>
    </div>
  </section>

  <section class="mapview">
    <div class="canvasrow">
      <svg class="map" viewBox="598 127 728 562" shape-rendering="crispEdges">
        <g transform="translate(700 130) scale(.33333)" fill="#bffbe5" stroke="none">
          <path d="M430 31L488 33L498 39L512 40L518 46L516 80L512 132L530 150L532 230L522 255L517 308L527 320L533 345L564 372L565 405L585 412L608 440L612 462L640 480L650 420L625 418L605 402L578 350L574 325L585 290L579 260L580 230L574 184H672L700 192L800 260V1310L697 1260L545 1175L398 1090L268 1020L243 1008L262 1000L271 985L250 965L252 940L262 930L240 928L243 915L270 905L285 885L262 880L240 855L232 840L245 820L258 790L260 770L285 755L300 735L318 700L328 685L370 665L362 645L390 605L392 570L378 480L358 455L357 432L335 420L325 385L310 378L303 345L308 310L290 297L268 290L254 270L240 220L340 120L400 70Z"/>
          <g transform="translate(600 150)"><path d="M0 34H72L100 45L150 78L195 107L245 140L265 160L325 155L345 158L370 172L410 175L440 183L465 184L478 192L490 180L514 152L526 122L560 103L600 88L660 62L680 62L695 80L705 87L722 108L760 107L780 104L800 108H833L790 170L740 240L697 278V833L740 890L785 947L783 957L768 970L750 990L735 1003L705 1022L700 1045L680 1058L655 1080L640 1095H610L595 1103L575 1125V1160L568 1200L545 1213L527 1265L518 1290L495 1330L480 1370L455 1410H430L314 1328L215 1262L205 1240L183 1228L200 1215L198 1165L140 1133L0 1056Z"/></g>
          <path d="M574 184L533 160L531 230L522 255L521 285L517 308L527 320L533 345L538 352L564 372L565 405L585 412L600 425L608 440L612 462L622 475L624 490L632 494L641 490L650 478V422L625 418L605 402L595 385L583 362L578 350L574 325L585 290L579 260L580 230L575 205Z" fill="#fff"/>
          <path d="M298 905L310 888L325 880L345 872L357 875L362 890L372 895L362 908L345 912L315 907L308 920L298 930L282 926L265 930L240 926L246 918L262 916L275 910L285 918Z" fill="#fff" stroke="#737373" stroke-width="3"/>
        </g>
        <g transform="translate(700 130) scale(.33333)" fill="none" stroke="#737373" stroke-width="3">
          <path d="M569 184H672L684 186L700 192L712 202L780 246M574 184L575 205L580 230L577 240L579 260L578 280L586 290L580 310L574 325L576 340L584 354L580 358L590 370L595 385L600 388L605 402L622 410L625 418H645L650 422V478L641 490L632 494L624 490L622 475L612 462L608 440L600 425L585 412L565 408V374L552 364L538 352L533 345V325L517 311L521 285V255L526 240L531 230L530 180L536 165L530 150L512 132L513 105L517 75L518 46L512 40L498 39L488 33L430 31L410 62L390 80L370 95L340 120L300 160L240 217L248 229L246 240L256 255L252 270L266 272L270 282L262 286L278 290L290 300L300 298L311 308L303 330L300 340L305 352L310 378L325 385L330 402L330 420L345 425L357 432V447L368 460L380 480L382 491L392 490L395 475L403 480L406 468L415 452L420 460L424 467L425 480L430 498L438 520L445 546L453 572L465 587L488 595L508 602L514 614L535 642L556 680L575 692L605 717L613 733"/>
          <path d="M378 480L383 510L388 545L392 570V605L368 633L360 645L368 660L395 668L438 682L450 682L460 675L475 663L498 658M508 602L502 635L499 680L490 690L488 730L484 760L493 780L500 805L508 812L500 822L480 829L466 855L458 858L462 870L482 868"/>
          <path d="M632 494L650 508L652 520L640 532L628 534L625 560L615 590L606 620L597 614L595 625L585 630L600 635L608 650L600 660L606 670L603 690L610 705L605 717M650 476L658 475L660 488L675 518L683 550L712 560L735 570L755 605L780 647M613 733H650L665 728L675 742L708 739L740 742L750 766L780 769M674 766L740 775L755 790L753 815L728 845L706 857L690 865L695 880L690 892L675 890L670 877L660 882L640 877L634 890L636 905L648 910L652 940L640 960L648 975L640 995"/>
          <path d="M368 662L355 672L330 685L318 690L316 715L300 732L290 742L293 755L260 770L258 790L249 800L243 820L232 840L243 855L252 863L248 875L264 880L262 895L275 900L282 885L290 895L298 905M300 738L340 735L375 730L410 716L440 720L488 728M298 780H340L375 765L408 755L412 725M380 770L412 772L440 825L458 850M340 785L338 800L336 835L310 836L300 820L298 780L268 790M385 770V815L376 830L355 840L336 835M260 785V810L268 815L248 820M245 850L280 862L300 860L320 845L340 860L375 865L380 862L435 860L455 862"/>
          <path d="M330 690L345 700L362 710M330 685L336 700L360 704L362 735M415 715V770M396 725L408 730L405 745L395 745L380 752L370 765M455 735L468 740V750L458 752L465 765V800L478 830M580 735L605 740L613 733L595 752L583 765L586 790L580 800L578 810H542V795L535 795L532 805L508 812M575 812L572 830L565 845L550 848L545 860L535 855L538 842L532 845L530 860L508 888L500 880L495 870L480 868L490 880L482 892L492 900L468 900L455 910L465 930L478 940L480 955L490 960L505 930L515 925L530 935L545 938L550 955L565 965L570 985L590 1000L597 1015L575 1045L555 1070L553 1105L547 1135V1175"/>
          <path d="M400 860V870L375 885L368 905L368 920H395L393 900L405 888L430 875L440 885L455 880L460 870M395 905V960L412 960L425 955V930L458 925M300 930L285 940L265 930L250 945L255 965L248 970L270 985L262 1010L245 1008M262 960L275 975L290 985L320 980L335 965L345 945L338 925L345 912M340 930V1020L350 1062M340 970L350 965L370 975L372 990L412 992L440 1012L398 1045V1090M345 1004L405 990M360 940L375 930L390 950L405 985M300 1030L325 1020L345 1018M345 962L370 940L395 920M460 955L458 970L475 975L455 998L425 1020L412 1032M412 958L460 955L478 940"/>
          <path d="M585 810L580 855L585 852L610 842L620 845L640 855L640 877M580 855L575 870L580 905L600 925L605 950L625 968L628 990L635 1000L640 995M635 1000L625 1015L620 1040L648 1050L680 1065L690 1068L690 1050L710 1050L720 1045L735 1030L750 1020L755 1005M640 1050L655 1035L675 1040L690 1050M682 1065L700 1095L718 1120L720 1145L740 1155L780 1177M600 1015L628 1030M243 1008L268 1020L300 1032L350 1062L398 1090L472 1135L545 1175L620 1217L697 1258"/>
          <path d="M232 842L240 846M240 848L252 858M240 862L255 875M262 915L250 925M245 1003H262" stroke-width="6"/>
        </g>
        <g transform="translate(900 180) scale(.33333)" fill="none" stroke="#737373" stroke-width="3">
          <path d="M0 34H72L84 38L100 47L150 78L195 107L245 140L265 160H320L325 155L330 160L348 160L355 168L370 172L410 175L440 183H465L470 190L478 192L490 178L514 152L526 122L560 103L580 94L600 88L660 62L672 60L680 68L695 80L705 87L722 108L760 107L772 104L785 108L800 104L833 108L790 170L740 240L697 278V833L740 890L785 947L780 962L768 970L770 980L750 990L740 1006L705 1022L700 1045L680 1058L665 1065L655 1080L640 1095L625 1088L610 1095L595 1103L575 1125V1160L568 1200L545 1213L535 1235L527 1265L518 1290L505 1315L495 1330L480 1370L470 1385L455 1410H430L380 1375L314 1328L215 1262L207 1240L183 1228L192 1218L200 1215V1187H222L238 1127V1115"/>
          <path d="M0 1056L42 1078L90 1103L140 1133L198 1165L200 1187M265 160L300 202L330 260L345 300L365 345L385 375L392 395L415 420L430 445L445 462L463 473L450 478L440 486L445 505L465 550L485 595L512 630L540 640L560 652L590 675L612 679L648 670L660 655L697 636M440 183L448 198V250L415 262L408 275L407 295L395 318L380 322L386 340L388 370V390L303 437V450L298 468L280 482L240 510M514 152V202L548 216L565 235L590 255L622 272V292L635 325L655 352L675 360L690 376L697 377"/>
          <path d="M50 325H58L83 400L95 406L125 408L150 440L165 470L182 498L210 490L238 493V512L245 540L254 550V590L235 590L210 606L185 615L155 619L135 597L110 597L82 595L75 615L90 622L142 628L153 640L155 661L182 663M182 634L205 622L257 604L262 630L275 660L280 675L290 680L310 718L345 775L375 825L392 868L395 890V985L398 995L385 1040L368 1060L347 1078L350 1090L403 1160L430 1167L420 1210L410 1247L405 1262L390 1258L398 1270L400 1290L385 1305L314 1328M182 634L180 663L195 680L230 705L232 700L270 700L290 710L310 718L330 712L345 705L358 715L385 720L408 712L420 724L450 730L480 750L495 780L518 805L530 845L540 878L552 900V925L570 935L574 975V1000L582 1015L587 1068L625 1070L655 1078M465 556L445 560L440 575L420 598L395 612L375 617L365 630L350 630L358 680L355 710"/>
          <path d="M582 1015L640 985L683 965L785 957M440 1160L520 1065L532 1055L572 1115V1125M420 1206H475L510 1190L525 1205L540 1212M410 1245H440L455 1270L470 1270M455 1270L450 1285L480 1305M238 1127L270 1113L290 1120L318 1155L345 1158L370 1167L430 1165M318 1155L305 1120L290 1075L265 1055L240 1030V1010L225 960L212 935L218 915L205 905L185 873L210 873L218 880L260 880L290 885L330 878L335 868L362 870L392 868M222 875L220 855L216 830L185 830L160 840L140 830L135 820L170 817L168 795L200 790L230 770L218 745L215 732L180 738L142 733L108 707L100 706M142 733L230 770M142 733L120 780V795L135 820M142 733L162 775L168 795M150 735L165 755L200 773M230 700L232 755L222 765L235 770L240 745L275 740L290 715L310 718M230 770V815L216 830"/>
          <path d="M100 708L95 720L98 740L85 748L72 740L75 725L55 720L40 730L36 750L45 780L48 800L60 793L85 797L120 800L135 820L60 815L45 820L40 835L60 855L75 865L80 885L108 892L125 870L155 863L140 840L130 855L100 845L80 830L45 825M48 800L45 825L30 855L18 895L42 900L50 892L70 885L80 885M42 900L60 915L80 917L90 920L108 898M80 920L95 945L118 970L120 990L140 1000L180 1032L200 1033L198 1048L185 1060L215 1090L238 1120M118 970L155 962L152 945L165 935L185 937L205 950L210 935M0 870L25 878M15 685L28 705L42 702M0 765L12 800L28 820L35 860"/>
        </g>
        <g transform="translate(900 180) scale(.33333)" fill="#737373"><path d="M665 1000l10-3 5 8 10-8 5-7 12 2-3 8-10 4 2 10-10 8 18 3-1 5-12 2 8 10 8 4-2 8-10 3-10 8-14-3-8 8-12-8 1-12 24 1 10-12 2-14-8-10-8 4zM695 1015l20 5 10 6-10 6-20-2zM720 1000l10-8 8 3 6 6 1 12-12 5-4-8 5-4-14-4zM540 1207h12v12h-12zM512 1243l12 5-3 10-10-4zM478 1302l14 2 8-8 2 10 8 3-8 10-6 12-14-2-6-12zM568 1150l14 8-10 6zM425 1408l10-18 10 5 8-8 4 10 6-6 8-6-4 14-8 4-3 10-14-12-8 12zM448 1248h6v14h-6z"/></g>
        <defs><g id="dotrow" color="#6d0a90"><use href="#dot" x="710" width="6" height="6"/><use href="#dot" x="743" width="6" height="6"/><use href="#dot" x="777" width="6" height="6"/><use href="#dot" x="811" width="6" height="6"/><use href="#dot" x="844" width="6" height="6"/><use href="#dot" x="878" width="6" height="6"/><use href="#dot" x="911" width="6" height="6"/><use href="#dot" x="945" width="6" height="6"/><use href="#dot" x="978" width="6" height="6"/><use href="#dot" x="1012" width="6" height="6"/><use href="#dot" x="1045" width="6" height="6"/><use href="#dot" x="1079" width="6" height="6"/><use href="#dot" x="1113" width="6" height="6"/><use href="#dot" x="1146" width="6" height="6"/><use href="#dot" x="1180" width="6" height="6"/></g></defs>
        <use href="#dotrow" y="185"/><use href="#dotrow" y="211"/><use href="#dotrow" y="236"/><use href="#dotrow" y="261"/><use href="#dotrow" y="286"/><use href="#dotrow" y="311"/><use href="#dotrow" y="336"/><use href="#dotrow" y="362"/><use href="#dotrow" y="387"/><use href="#dotrow" y="412"/><use href="#dotrow" y="437"/><use href="#dotrow" y="462"/><use href="#dotrow" y="487"/><use href="#dotrow" y="513"/><use href="#dotrow" y="538"/><use href="#dotrow" y="563"/><use href="#dotrow" y="588"/><use href="#dotrow" y="613"/><use href="#dotrow" y="638"/><use href="#dotrow" y="664"/>
      </svg>
      <div class="vbar"><svg viewBox="0 0 15 31"><path d="M4 11h7L7.500 7.500z" fill="#444"/></svg><div class="vthumb"><i class="vticks"></i></div><svg class="vdn" viewBox="0 0 15 45"><path d="M4 36h7l-3.500 3.500z" fill="#444"/></svg></div>
    </div>
    <div class="hbar maph"><div class="thumb"><i class="ticks"></i></div><svg viewBox="0 0 20 15"><path d="M9 4v7l3.500-3.500z" fill="#444"/></svg></div>
  </section>

  <aside class="dock"><div class="tab"><svg class="i16"><use href="#srch"/></svg><span>Search</span></div></aside>
</main>

<div class="status"><i class="cell"></i><i class="cell narrow"></i><span>30.961&nbsp; 3.177 Decimal Degrees</span></div>

<footer class="taskbar">
  <div class="start"><svg viewBox="0 0 40 40"><circle cx="20" cy="20" r="18" fill="url(#orb)" stroke="#28455a"/><path d="M5 17q2-14 15-15 13 1 15 15-15-5-30 0z" fill="#fff" opacity=".25"/><path d="M12 11q4-2 7 0l-2 8q-3-2-7 0z" fill="#e8632c"/><path d="M20.500 12q4 2 8 0l-2 8q-4 2-8 0z" fill="#8fc73c"/><path d="M9.500 20.500q4-2 7 0l-2 8q-3-2-7 0z" fill="#4ea5dd"/><path d="M18 21.500q4 2 8 0l-2 8q-4 2-8 0z" fill="#fbce3b"/></svg></div>
  <div class="apps">
    <div class="app btn"><svg viewBox="0 0 32 32"><path d="M1 3h10l1 2h18v24H1z" fill="#f0d67c" stroke="#c5a244"/><path d="M2 8h28v20H2z" fill="#f8e9a4"/><path d="M4 1h8v3H4zM13 3h8v3h-8zM21 5h8v3h-8z" fill="#fff"/><path d="M4 1h3v2H4z" fill="#3a3"/><path d="M12 4h4v2h-4z" fill="#d43"/><path d="M20 6h3v2h-3z" fill="#27b"/><path d="M11 8v20M20 9v9" stroke="#dfc46a"/><path d="M5 30V21q0-3 3-3h16q3 0 3 3v9h-5v-6q-6-2-12 0v6z" fill="#9fd4ee" stroke="#5aa0c8"/></svg></div>
    <div class="app btn"><svg viewBox="0 0 32 32"><circle cx="16" cy="16" r="14" fill="#fccf31"/><path d="M16 16L3.900 9A14 14 0 0 1 28.500 9.500L16 9.500z" fill="#d8392c"/><path d="M3.900 9A14 14 0 0 0 15 30l6-10.500-5 2-6-2z" fill="#45a244"/><circle cx="16" cy="16" r="6.500" fill="#fff"/><circle cx="16" cy="16" r="5" fill="#3f7bc8"/></svg></div>
    <div class="app btn"><svg viewBox="0 0 32 32"><circle cx="16" cy="16" r="15" fill="#8fc800"/><g fill="none" stroke="#1b2800" stroke-linecap="round"><path d="M7 11q10-3 19 2" stroke-width="3"/><path d="M8 16.500q8-2 16 2" stroke-width="2.500"/><path d="M9 21.500q7-2 13 2" stroke-width="2"/></g></svg></div>
    <div class="app"><svg viewBox="0 0 32 32"><g stroke="#fff" stroke-width="3"><circle cx="16" cy="16" r="11" fill="#111"/><circle cx="7" cy="16" r="5.500" fill="#111"/><ellipse cx="20" cy="8" rx="6" ry="5" fill="#bdd4e6"/></g><path d="M4 16q0-9 12-11 11 2 11 12-1 9-11 10Q5 26 4 16z" fill="#111"/><path d="M16 12l-3 13 4 1 3-14zM22 14l-2 11 4-4 1-7z" fill="#f6b521"/><ellipse cx="20" cy="8.500" rx="5" ry="4" fill="#c6d9ea" stroke="#111"/><circle cx="7.500" cy="16" r="3" fill="#fff"/><path d="M28 28V19l3 3" fill="none" stroke="#fff" stroke-width="3"/><path d="M28 28V20l3 2" fill="none" stroke="#111"/><circle cx="27" cy="28" r="1.500" fill="#111" stroke="#fff"/></svg></div>
    <div class="app"><svg viewBox="0 0 32 32"><ellipse cx="16" cy="26" rx="13" ry="3" fill="#5c4337" opacity=".35"/><path d="M11 13l9 8" stroke="#444" stroke-width="3"/><ellipse cx="9" cy="8" rx="8" ry="5.500" fill="#d8dcd8" stroke="#4b5355" transform="rotate(30 9 8)"/><ellipse cx="22" cy="22" rx="8.500" ry="6" fill="#d8dcd8" stroke="#4b5355" transform="rotate(30 22 22)"/><ellipse cx="10.500" cy="7" rx="5" ry="4.500" fill="#2e7d88" stroke="#173d44"/><ellipse cx="22.500" cy="20.500" rx="5" ry="4.500" fill="#2e7d88" stroke="#173d44"/><circle cx="10" cy="6" r="2" fill="#72c3c0"/><circle cx="22" cy="20" r="2" fill="#72c3c0"/></svg></div>
    <div class="app"><svg viewBox="0 0 32 32"><circle cx="16" cy="16" r="15.500" fill="#fff"/><path d="M12 2.500V11l-3.500 9L2.500 16Q2 6 12 2.500z" fill="#8657b6"/><path d="M13.500 2Q20 .5 25 5l-1 9-10.500-7z" fill="#e23c2e"/><path d="M26 6q6 7 3 15h-8l4-8z" fill="#f2912b"/><path d="M28 22.500Q23 30 14 29.500L11.500 22z" fill="#3f9c35"/><path d="M12.500 29Q4 27 2.500 18l8 4z" fill="#3d79cb"/></svg></div>
    <div class="app word"><svg viewBox="0 0 32 32"><path d="M2.500 5l3-3.500h24v25l-3 3h-24z" fill="#cfe2f6" stroke="#2458a6"/><path d="M6 5h20v18H6z" fill="#fff"/><path d="M6 7h4l2 10 3-10h3l2 10 2-10h4l-4 15h-4l-3-8-3 8H9z" fill="#1c4f9f"/><path d="M18 20l12 1v9l-11-2z" fill="#f2f7fc" stroke="#88a"/><path d="M20 23l8 1M20 25.500l8 1" stroke="#6b93c7"/></svg></div>
    <div class="app"><svg viewBox="0 0 32 32"><path d="M2.500 5l3-3.500h24v25l-3 3h-24z" fill="#d9edd8" stroke="#2f8740"/><path d="M6 5h20v20H6z" fill="#fff"/><path d="M5 6h6l4 6 4-7h5l-7 9 5 7h-6l-3-4-4 4H4l7-9z" fill="#3b9548"/><path d="M14 20l16-4-1 14-14-1z" fill="#eef7ee" stroke="#8b9"/><path d="M16 22l12-3M16 25l12-2M22 19l-1 10" stroke="#69b070"/></svg></div>
    <div class="app"><svg viewBox="0 0 32 32"><path d="M16 1l3 8 8-5-2 8 6 4-6 4 3 8-8-3-4 6-4-6-8 4 2-9-5-3 6-4-4-9 9 4z" fill="#c31818"/><path d="M11 10l8-1 6 7-3 7-9 1-5-7z" fill="#ea4a3a"/><path d="M11 10l4 6 10 0M15 16l-7 2M15 16l-2 8" stroke="#9c1010" fill="none"/></svg></div>
    <div class="app"><svg viewBox="0 0 32 32"><path d="M0 0h32v32H0z" fill="#a9122a"/><path d="M7 20q0-7 4.500-7l4.500 3 4.500-3q4.500 0 4.500 7" fill="none" stroke="#fff" stroke-width="3"/><g fill="#fff"><circle cx="11" cy="12" r="3.200"/><circle cx="21" cy="12" r="3.200"/><circle cx="6.500" cy="20.500" r="2.800"/><circle cx="16" cy="19.500" r="3"/><circle cx="25.500" cy="20.500" r="2.800"/></g></svg></div>
    <div class="app"><svg viewBox="0 0 32 32"><path d="M1.500 4.500h28v23h-28z" fill="#050505" stroke="#999"/><path d="M2 5h27v2H2z" fill="#cfdfe9"/><path d="M8 10.500H5.500v4H8M10 11v1M10 14v1M12.500 10l3 5M17 15.500h8" stroke="#eee" fill="none" stroke-width="1.200"/></svg></div>
    <div class="app btn active"><svg viewBox="0 0 32 32"><use href="#arc"/></svg></div>
  </div>
  <div class="tray">
    <span class="lang">EN</span>
    <svg class="kb" viewBox="0 0 16 14"><path d="M.5 5.500h15v8H.5z" fill="#bfb4ae" stroke="#e4dcd8"/><path d="M2 7.500h12M2 9.500h12M4 11.500h8" stroke="#5d483e" stroke-dasharray="1 1"/><path d="M8 5q-1-3 2-3 4 1 4-2" stroke="#d8d0cc" fill="none"/></svg>
    <svg class="up" viewBox="0 0 8 6"><path d="M0 5h8L4 1z" fill="#fff"/></svg>
    <svg class="sig" viewBox="0 0 16 13"><path d="M1 10h2v3H1zM4 8h2v5H4zM7 6h2v7H7zM10 3h2v10h-2zM13 1h2v12h-2z" fill="#fff"/></svg>
    <svg class="vol" viewBox="0 0 14 14"><path d="M1 5h2l4-4v12L3 9H1z" fill="#fff"/><path d="M10 4q2 3 0 6" stroke="#fff" fill="none"/></svg>
    <svg class="dbx" viewBox="0 0 16 16"><path d="M4 1l4 3-4 3-4-2.500zM12 1l4 3-4 3-4-3zM4 7l4 3-4 2-4-3zM12 7l4 2-4 3-4-2zM4 13l4-2 4 2-4 2.500z" fill="#bfe4fb" stroke="#338bd0" stroke-width=".5"/><circle cx="11.500" cy="12" r="4" fill="#32a52c"/><path d="M9.500 12l1.500 1.500 2.500-3" stroke="#fff" fill="none"/></svg>
    <div class="clock"><span>1:59 PM</span><span>12/11/2013</span></div>
    <i class="showdesk"></i>
  </div>
</footer>

<div class="ctx">
  <div class="mi"><svg class="i16"><use href="#copy"/></svg><span>Copy</span></div>
  <div class="mi"><svg class="i16"><use href="#x"/></svg><span>Remove</span></div>
  <hr>
  <div class="mi hot"><svg class="i16"><use href="#table"/></svg><span>Open Attribute Table</span></div>
  <div class="mi more"><i class="i16"></i><span>Joins and Relates</span></div>
  <hr>
  <div class="mi"><svg class="i16"><use href="#zlay"/></svg><span>Zoom T</span></div>
  <div class="mi gray"><svg class="i16"><use href="#zvis"/></svg><span>Zoom T</span></div>
  <div class="mi more"><i class="i16"></i><span>Visible</span></div>
  <hr>
  <div class="mi"><i class="i16"></i><span>Use Symbol Levels</span></div>
  <hr>
  <div class="mi more"><i class="i16"></i><span>Selection</span></div>
  <hr>
  <div class="mi"><i class="i16"></i><span>Label Features</span></div>
  <hr>
  <div class="mi more"><i class="i16"></i><span>Edit Features</span></div>
  <hr>
  <div class="mi gray"><svg class="i16"><use href="#cla"/></svg><span>Convert Labels to Annotation...</span></div>
  <div class="mi"><svg class="i16"><use href="#cfg"/></svg><span>Convert Features to Graphics...</span></div>
  <div class="mi"><i class="i16"></i><span>Convert Symbology to Representation...</span></div>
  <hr>
  <div class="mi more"><i class="i16"></i><span>Data</span></div>
  <hr>
  <div class="mi"><svg class="i16"><use href="#lay"/></svg><span>Save As Layer File...</span></div>
  <div class="mi"><svg class="i16"><use href="#laypkg"/></svg><span>Create Layer Package...</span></div>
  <hr>
  <div class="mi"><svg class="i16"><use href="#props"/></svg><span>Properties...</span></div>
</div>
<div class="tip"><b>Open Attribute Table</b><p>Open this layer's attribute table.<br><span class="wide">Shortcut: CTRL + double-click</span><br><span class="wide">layer name OR CTRL + T.</span></p></div>
</div>
</body>
</html>
```
FILE: styles.css
```
* { box-sizing: border-box; }
body { margin: 0; overflow: hidden; font: 12px/18px "Open Sans", "Noto Sans", sans-serif; letter-spacing: -0.3px; color: #000; }
.defs { position: absolute; }
svg { display: block; flex: none; }
i { font-style: normal; display: block; flex: none; }
span, b { white-space: nowrap; }
.i16 { width: 16px; height: 16px; flex: none; }
.desktop { position: relative; width: 1366px; height: 768px; display: flex; flex-direction: column; background: linear-gradient(90deg, #f0f0f0, #f6f6f6 50%, #fbfbfb); }
.titlebar, .menubar, .toolrows, .work, .status { flex: none; }

.titlebar { height: 22px; display: flex; justify-content: space-between; border-bottom: 1px solid #4a3228; box-shadow: inset 0 -1px #cfb8ad;
  background: radial-gradient(ellipse 80px 18px at 66px 11px, rgba(255,255,255,.5), rgba(255,255,255,.35) 50%, transparent),
    linear-gradient(35deg, transparent 0 420px, rgba(80,40,25,.22) 440px, transparent 475px 640px, rgba(80,40,25,.25) 670px, transparent 690px 710px, rgba(80,40,25,.22) 725px, transparent 760px),
    linear-gradient(90deg, #97705e, #a27b69 20%, #93695a 32%, #a37c69 45%, #a57e6c 70%, #966d58 82%, #a17a66 90%, #c0a598); }
.caption { display: flex; align-items: center; gap: 5px; height: 21px; letter-spacing: -0.1px; }
.winbtns { display: flex; height: 18px; width: 104px; margin-right: 3px; border: 1px solid #4d3a33; border-top: 0; border-radius: 0 0 4px 4px; overflow: hidden; box-shadow: 0 0 0 1px rgba(255,255,255,.4); }
.winbtns svg { height: 17px; background: linear-gradient(#cdbab1 45%, #94796d 50%, #b9a297); border-right: 1px solid #4d3a33; }
.wb-min { width: 29px; } .wb-max { width: 27px; }
.winbtns .wb-close { width: 47px; background: linear-gradient(#dd9b8b 45%, #b5280d 50%, #d8583a); border: 0; }

.menubar { height: 26px; padding-left: 12px; display: grid; grid-template-columns: 34px 36px 41px 74px 46px 64px 94px 72px 65px 40px; align-items: center; letter-spacing: -0.2px; }

.toolrows { height: 78px; }
.toolrow { height: 26px; display: flex; gap: 73px; }
.band { display: flex; align-items: flex-start; width: max-content; height: 24px; margin-left: 3px; padding-top: 1px; border-radius: 3px; background: linear-gradient(#fdfdfd, #ededed); }
.grip { width: 7px; height: 16px; margin-top: 3px; background: repeating-linear-gradient(#b3b3b3 0 2px, transparent 2px 4px) 3px 0 / 2px 16px no-repeat; }
.t { width: 22px; height: 22px; padding: 3px; }
.on { border: 1px solid #3c96f0; background: #e4f0fc; padding: 2px; }
.off { border-color: #a9b3bd; background: #e8f0f7; }
.t.dim { opacity: .35; }
.sep { width: 6px; height: 14px; margin-top: 4px; background: linear-gradient(#b9b9b9, #b9b9b9) 2px 0 / 1px 14px no-repeat; }
.drop { width: 11px; height: 22px; padding: 3px 3px 3px 2px; }
.drop.dim { opacity: .45; }
.end { width: 10px; height: 24px; margin: -1px 0 0 2px; background: linear-gradient(#e9e9e9, #a2a2a2); position: relative; }
.end::before { content: ""; position: absolute; left: 3px; top: 15px; width: 5px; height: 1px; background: #000; }
.end::after { content: ""; position: absolute; left: 3px; top: 18px; border: 3px solid transparent; border-top-color: #000; border-bottom: 0; }
.combo { display: flex; justify-content: space-between; align-items: center; background: #fff; border: 1px solid #d7dadf; padding-left: 2px; }
.scale { width: 148px; height: 20px; font-family: "Liberation Sans", sans-serif; font-size: 11.5px; letter-spacing: -0.1px; }
.scale span { line-height: 18px; }
.pct { width: 60px; height: 20px; border-color: #a5a5a5; background: #fafafa; }
.pct span { background: linear-gradient(90deg, #3397fd 27px, #eee 27px); color: #63666b; width: 37px; height: 15px; line-height: 15px; font-family: "Liberation Sans", sans-serif; }
.editlabel { width: 36px; line-height: 22px; padding-left: 2px; }
.editor .editlabel + .drop { width: 8px; padding: 3px 2px 3px 0; }

.work { height: 583px; display: flex; }
.panel { display: flex; flex-direction: column; }
.results { width: 288px; margin-right: 4px; padding-bottom: 1px; }
.contents { width: 300px; padding-bottom: 1px; }
.phead { height: 19px; display: flex; align-items: center; padding: 0 4px; color: #40444c; background: linear-gradient(90deg, #bfcddb, #d7e4f2); letter-spacing: -0.05px; line-height: 19px; }
.phead span { flex: 1; }
.contents .phead { width: 298px; }
.pin { width: 9px; height: 11px; margin-right: 6px; }
.cls { width: 9px; height: 9px; }
.results .cls { margin: 0 1px 0 0; }
.results .tree { flex: 1; border: 1px solid #828790; background: #fff; padding-top: 1px; }
.row { height: 18px; display: flex; align-items: center; }
.row > span, .row > b { line-height: 18px; padding: 0 1px; margin-left: 3px; letter-spacing: -0.3px; }
.row > b { letter-spacing: -0.6px; }
.row .ex { width: 9px; height: 9px; margin-right: 7px; margin-top: 2px; }
.results .l0 { padding-left: 8px; } .results .l1 { padding-left: 27px; } .results .l2 { padding-left: 46px; }
.results .i16 { margin-left: -1px; }
.results .l0 > span { margin-left: 4px; }
.results .l2 > span { margin-left: 4px; letter-spacing: -0.35px; }
.results .row .hl { background: #f0f0f0; margin-left: 3px; padding: 0 2px; letter-spacing: -0.5px; }
.tocbar { height: 26px; display: flex; padding: 2px 0 0 4px; background: linear-gradient(#fbfbfb, #efefef); }
.tocbody { flex: 1; display: flex; flex-direction: column; border: 1px solid #828790; width: 298px; background: #fff; }
.tocbody .tree { flex: 1; padding-top: 1px; }
.contents .l0 { padding-left: 8px; } .contents .l1 { padding-left: 27px; } .contents .l2 { padding-left: 46px; }
.contents .l0 > .i16, .contents .l1 > .i16 { margin-left: -1px; }
.contents .l1 > span { margin-left: 4px; }
.contents .row b { margin-left: 4px; }
.cb { width: 11px; height: 11px; border: 1px solid #000; background: #fff; margin: 1px 7px 0 1px; }
.ck::after { content: ""; display: block; width: 7px; height: 4px; margin: 1px 0 0 1px; border: solid #000; border-width: 0 0 2px 2px; transform: rotate(-48deg); }
.contents .l2 > span { margin-left: 0; padding: 0 2px 0 1px; }
.contents .l2 > .tight { letter-spacing: -0.45px; }
.contents .l2 > .picked { background: #3397fd; color: #fff; outline: 1px dotted #b86a18; outline-offset: -1px; width: 105px; padding-left: 2px; margin-left: -1px; }
.tb { width: 13px; height: 11px; margin: 0 7px 0 -1px; }
.sym { padding-left: 78px; padding-top: 1px; }
.dot { width: 6px; height: 6px; margin-left: 2px; }
.green { color: #69a015; } .teal { color: #087d7d; } .purple { color: #6d0a90; }
.sw { width: 15px; height: 11px; border: 1px solid #777; }
.mint { background: #bffbe5; } .lilac { background: #cfc1f3; } .lime { background: #c7f3d0; }
.hbar { height: 17px; display: flex; background: #f1f1f1; }
.hbar svg { width: 19px; height: 15px; }
.thumb { flex: 1; height: 15px; border: 1px solid #979797; border-radius: 2px; background: linear-gradient(#f5f5f5, #e8e8e8 45%, #c9c9cc 55%, #d8d8da); display: flex; justify-content: center; padding-top: 4px; }
.tocbody .thumb { margin-right: 64px; }
.ticks { width: 8px; height: 6px; background: repeating-linear-gradient(90deg, #666 0 1px, #aaa 1px 2px, transparent 2px 3px); }

.mapview { width: 750px; height: 584px; margin: -1px 0 0 4px; display: flex; flex-direction: column; border: solid #696969; border-width: 2px 0 0 2px; border-top-color: #808080; background: #f6f6f6; }
.canvasrow { height: 563px; display: flex; }
.map { width: 728px; height: 562px; background: #fff; }
.vbar { margin-left: 1px; width: 15px; display: flex; flex-direction: column; background: #f0f0f0; }
.vbar svg { width: 15px; height: 31px; }
.vbar .vdn { height: 45px; }
.vthumb { flex: 1; border: 1px solid #979797; border-radius: 2px; background: linear-gradient(90deg, #f5f5f5, #e8e8e8 45%, #c9c9cc 55%, #d8d8da); display: flex; align-items: center; padding-left: 3px; }
.vticks { width: 6px; height: 8px; background: repeating-linear-gradient(#666 0 1px, #aaa 1px 2px, transparent 2px 3px); }
.maph { width: 728px; height: 16px; overflow: hidden; }
.maph .thumb { margin-left: 90px; }
.dock { width: 20px; }
.tab { width: 21px; height: 68px; margin-top: 1px; border: 1px solid #999; border-radius: 3px; background: #f2f2f2; padding: 3px 0 0 1px; display: flex; flex-direction: column; gap: 5px; }
.tab span { writing-mode: vertical-rl; line-height: 16px; color: #666; font-family: "Liberation Sans", sans-serif; font-size: 12px; letter-spacing: 0; }

.status { height: 19px; background: #f0f0f0; display: flex; align-items: center; }
.cell { width: 127px; height: 17px; margin-left: 961px; border: 1px solid #eaeaea; }
.narrow { width: 18px; margin: 0 6px 0 2px; }
.status span { margin: 2px 0 0 -1px; letter-spacing: -0.5px; }

.taskbar { height: 40px; display: flex; border-top: 1px solid #2c1c16; box-shadow: inset 0 1px #c0a498; color: #fff;
  background: linear-gradient(55deg, transparent 0 900px, rgba(80,40,25,.2) 920px, transparent 960px),
    linear-gradient(90deg, #7c5b4c, #83604f 50px, #9f7865 130px, #94705e 260px, #9f7967 500px, #8c6655 560px, #a47d6a 700px, #93705e 900px, #a27c68 1060px, #a17a66 1100px, #7d5c4e 1130px, #745547 1250px, #7a5848); }
.start { width: 58px; padding: 0 0 0 7px; }
.start svg { width: 40px; height: 39px; }
.apps { display: flex; width: 744px; padding-top: 1px; }
.app { width: 60px; height: 38px; margin: 0 1px; display: flex; align-items: center; justify-content: center; border-radius: 3px; }
.app svg { width: 32px; height: 32px; }
.btn, .word { border: 1px solid #40291f; box-shadow: inset 0 0 0 1px rgba(255,255,255,.5); background: linear-gradient(135deg, rgba(255,255,255,.45), rgba(255,255,255,.15) 48%, rgba(255,255,255,.05) 52%, rgba(255,255,255,.25)); }
.active { background: linear-gradient(135deg, #efe6e2, #cdb8ae 50%, #bfa89e 52%, #ded0c8); }
.word { width: 52px; margin-right: 9px; box-shadow: inset 0 0 0 1px rgba(255,255,255,.5), 3px 0 0 -1px #a98d80, 4px 0 0 -1px #59402f, 7px 0 0 -1px #a98d80, 8px 0 0 -1px #59402f; }
.word svg { margin-right: 3px; }
.tray { flex: 1; display: flex; padding-left: 336px; align-items: flex-start; }
.tray svg { margin-top: 12px; }
.lang { width: 23px; margin-top: 8px; color: #eee4df; }
.tray .kb { width: 16px; height: 14px; margin-top: 10px; margin-left: -1px; }
.tray .up { width: 8px; height: 6px; margin: 17px 0 0 12px; }
.tray .sig { width: 16px; height: 13px; margin: 14px 0 0 13px; }
.tray .vol { width: 14px; height: 14px; margin-left: 10px; margin-top: 13px; }
.tray .dbx { width: 16px; height: 16px; margin-left: 8px; }
.clock { flex: 1; display: flex; flex-direction: column; align-items: center; padding: 4px 0 0 6px; line-height: 17px; letter-spacing: -0.3px; }
.clock span { line-height: 17px; }
.showdesk { width: 14px; height: 39px; border: 1px solid #4b352c; background: linear-gradient(135deg, #b59e94, #77584a 60%); box-shadow: inset 0 0 0 1px rgba(255,255,255,.25); }

.ctx { position: absolute; left: 430px; top: 288px; width: 279px; height: 430px; padding: 1px; border: 1px solid #868686; background: linear-gradient(90deg, #f7f7f7, #eeeeef 26px, #fdfdfd 26px); box-shadow: 3px 3px 4px rgba(0,0,0,.45); }
.mi { height: 22px; display: flex; align-items: center; padding-left: 4px; gap: 13px; position: relative; line-height: 22px; }
.ctx hr { margin: 1px 0 1px 33px; border: 0; height: 1px; background: #bdbdbd; }
.hot { background: #c2ddfb; border: 1px solid #3c96f0; padding-left: 3px; line-height: 20px; }
.gray { color: #adadad; }
.more::after { content: ""; position: absolute; right: 7px; top: 7px; border: 4px solid transparent; border-left-color: #000; border-right: 0; }
.tip { position: absolute; left: 501px; top: 367px; width: 193px; height: 87px; border: 1px solid #767676; background: linear-gradient(#fff, #c9d7ec); color: #4c4c4c; padding: 5px 4px; box-shadow: 3px 3px 3px rgba(0,0,0,.45); }
.tip b { display: block; letter-spacing: -0.45px; }
.tip p { margin: 8px 0 0 8px; line-height: 15px; letter-spacing: -0.35px; }
.tip .wide { letter-spacing: -0.1px; }
```
